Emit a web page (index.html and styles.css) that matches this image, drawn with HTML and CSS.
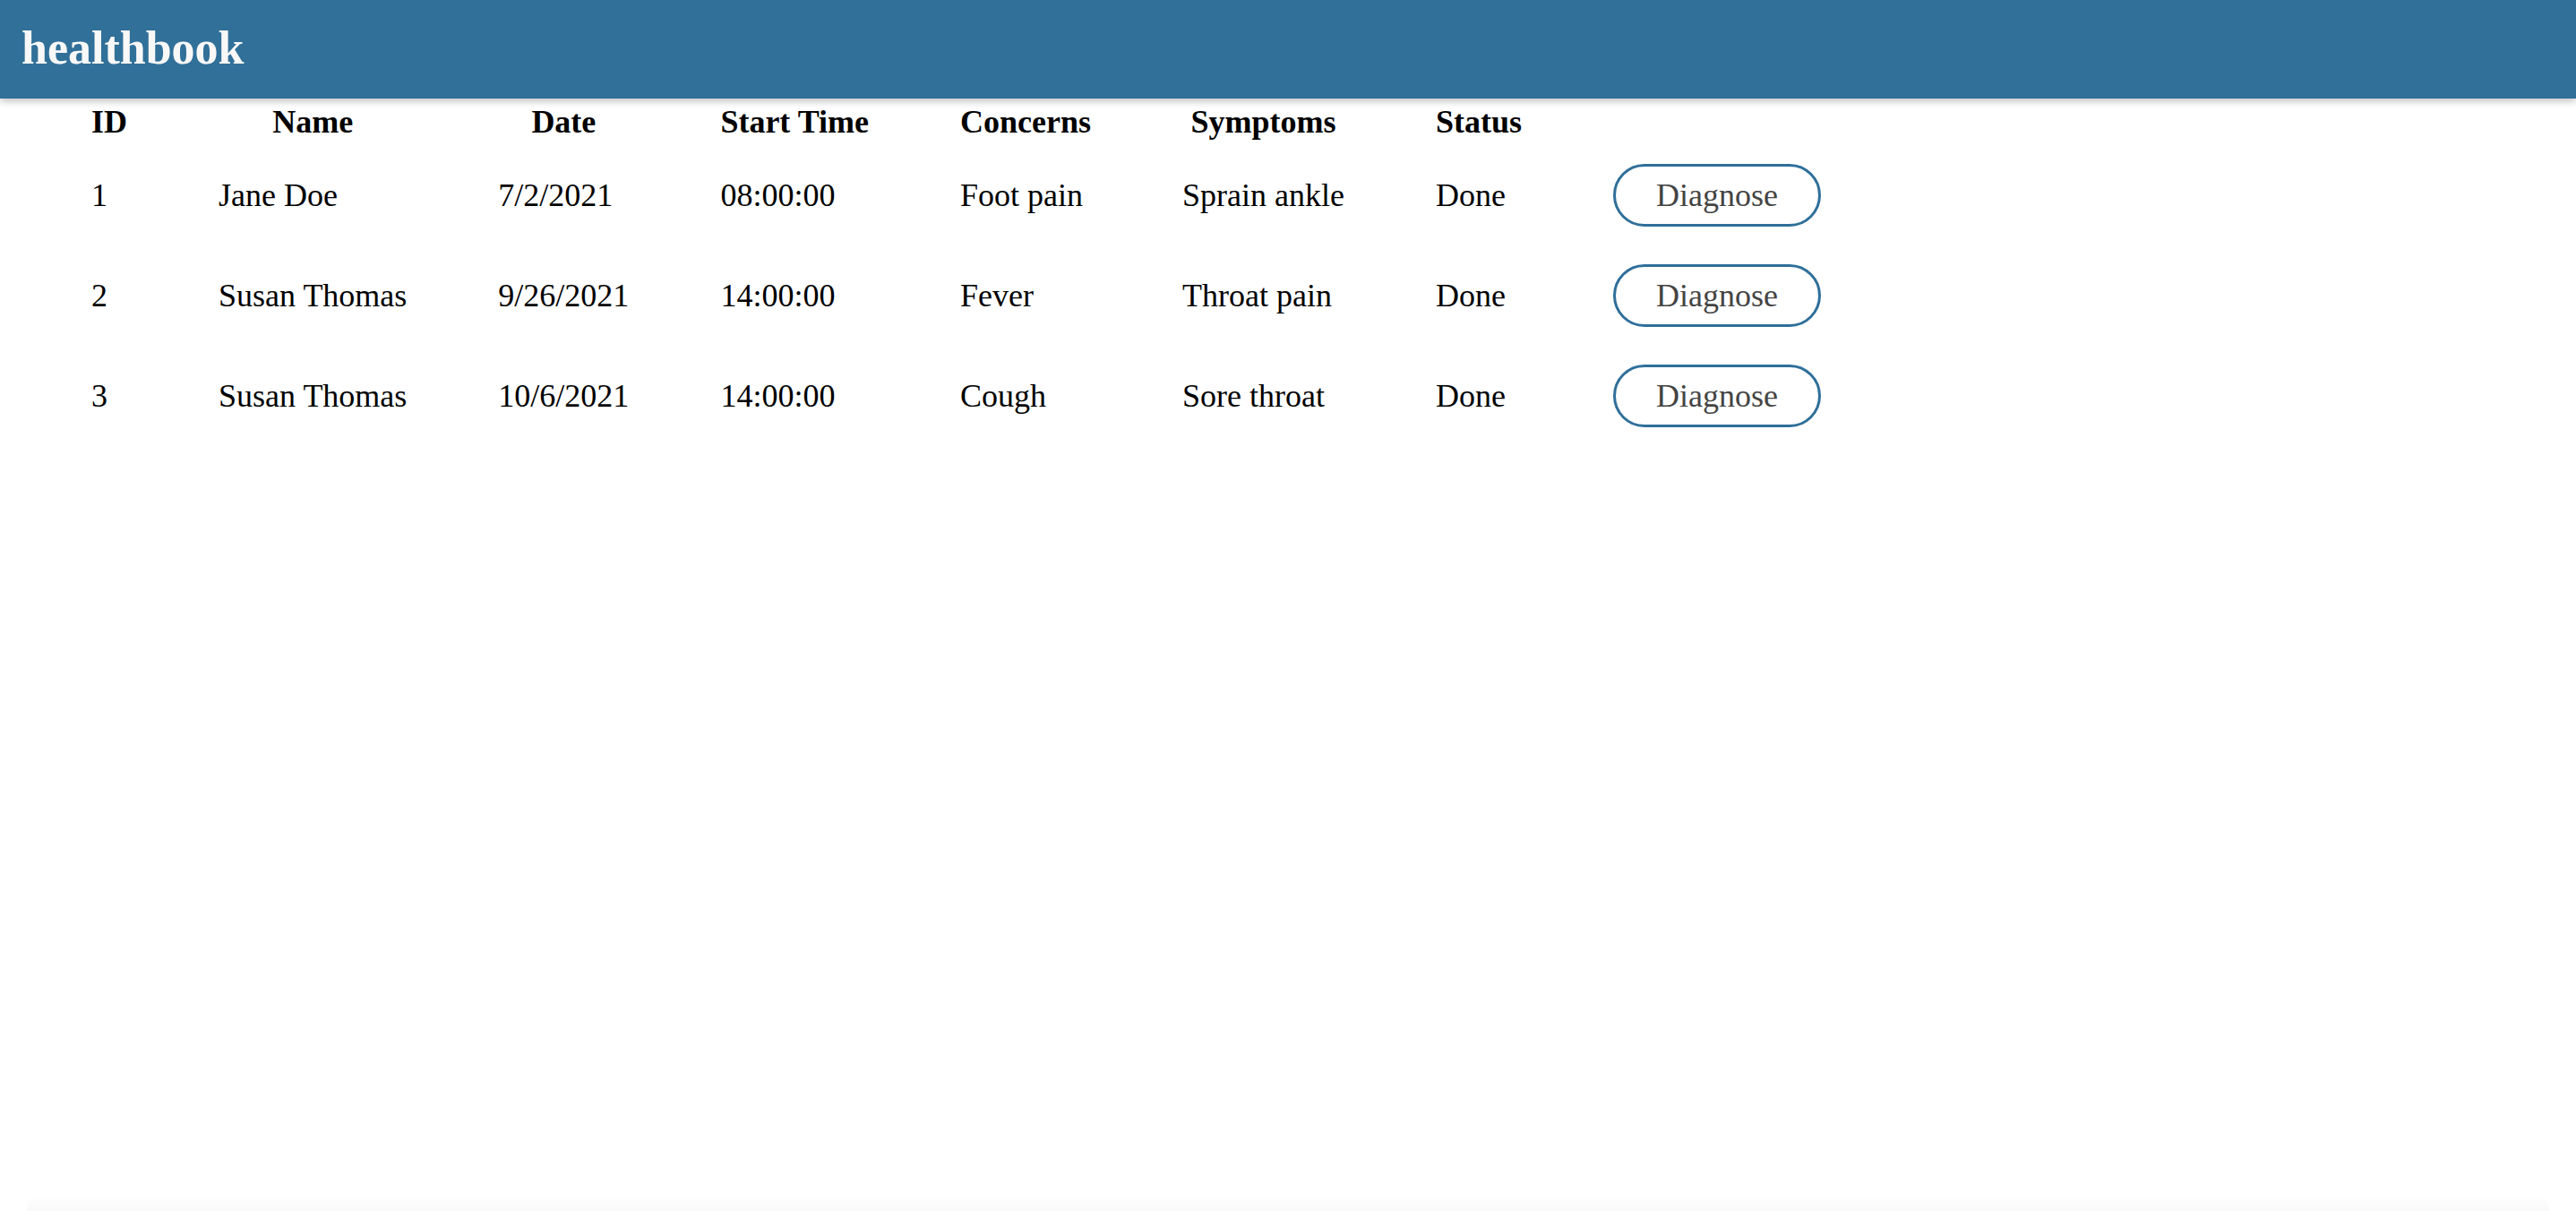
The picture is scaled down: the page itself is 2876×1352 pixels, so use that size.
FILE: index.html
```html
<!DOCTYPE html>
<html>
<head>
<meta charset="utf-8">
<title>healthbook</title>
<link rel="stylesheet" href="styles.css">
</head>
<body>
<header class="topbar">
  <h1 class="brand">healthbook</h1>
</header>
<main class="content">
  <table class="appts">
    <thead>
      <tr>
        <th>ID</th>
        <th>Name</th>
        <th>Date</th>
        <th>Start Time</th>
        <th>Concerns</th>
        <th>Symptoms</th>
        <th>Status</th>
        <th></th>
      </tr>
    </thead>
    <tbody>
      <tr>
        <td>1</td>
        <td>Jane Doe</td>
        <td>7/2/2021</td>
        <td>08:00:00</td>
        <td>Foot pain</td>
        <td>Sprain ankle</td>
        <td>Done</td>
        <td><button class="btn">Diagnose</button></td>
      </tr>
      <tr>
        <td>2</td>
        <td>Susan Thomas</td>
        <td>9/26/2021</td>
        <td>14:00:00</td>
        <td>Fever</td>
        <td>Throat pain</td>
        <td>Done</td>
        <td><button class="btn">Diagnose</button></td>
      </tr>
      <tr>
        <td>3</td>
        <td>Susan Thomas</td>
        <td>10/6/2021</td>
        <td>14:00:00</td>
        <td>Cough</td>
        <td>Sore throat</td>
        <td>Done</td>
        <td><button class="btn">Diagnose</button></td>
      </tr>
    </tbody>
  </table>
</main>
<div class="bottom-shade"></div>
</body>
</html>
```
FILE: styles.css
```css
html, body {
  margin: 0;
  padding: 0;
  background: #ffffff;
}
body {
  font-family: "Liberation Serif", "Times New Roman", serif;
  color: #000;
  min-height: 1352px;
  display: flex;
  flex-direction: column;
}
.topbar {
  background: #317099;
  height: 110px;
  box-sizing: border-box;
  padding: 24px 24px 0;
  box-shadow: 0 3px 8px rgba(0, 0, 0, 0.25);
  position: relative;
  z-index: 1;
}
.brand {
  margin: 0;
  font-size: 52px;
  font-weight: bold;
  color: #f8f8f8;
  line-height: 1.15;
}
.content {
  flex: 1;
}
.appts {
  border-collapse: separate;
  border-spacing: 0;
  margin-left: 51px;
  font-size: 36px;
}
.appts th {
  font-weight: bold;
  text-align: center;
  padding: 5px 51px;
  white-space: nowrap;
}
.appts td {
  text-align: left;
  padding: 21px 51px;
  white-space: nowrap;
  vertical-align: middle;
}
.btn {
  font-family: "Liberation Serif", "Times New Roman", serif;
  font-size: 36px;
  color: #444;
  background: #fff;
  border: 3.5px solid #2f6f9a;
  border-radius: 40px;
  padding: 12px 45px;
  line-height: 40px;
  height: 70px;
  box-sizing: border-box;
  display: block;
}
.bottom-shade {
  height: 18px;
  margin: 0 30px;
  border-radius: 40px 40px 0 0;
  background: linear-gradient(to bottom, rgba(0,0,0,0), rgba(0,0,0,0.025));
}
```
